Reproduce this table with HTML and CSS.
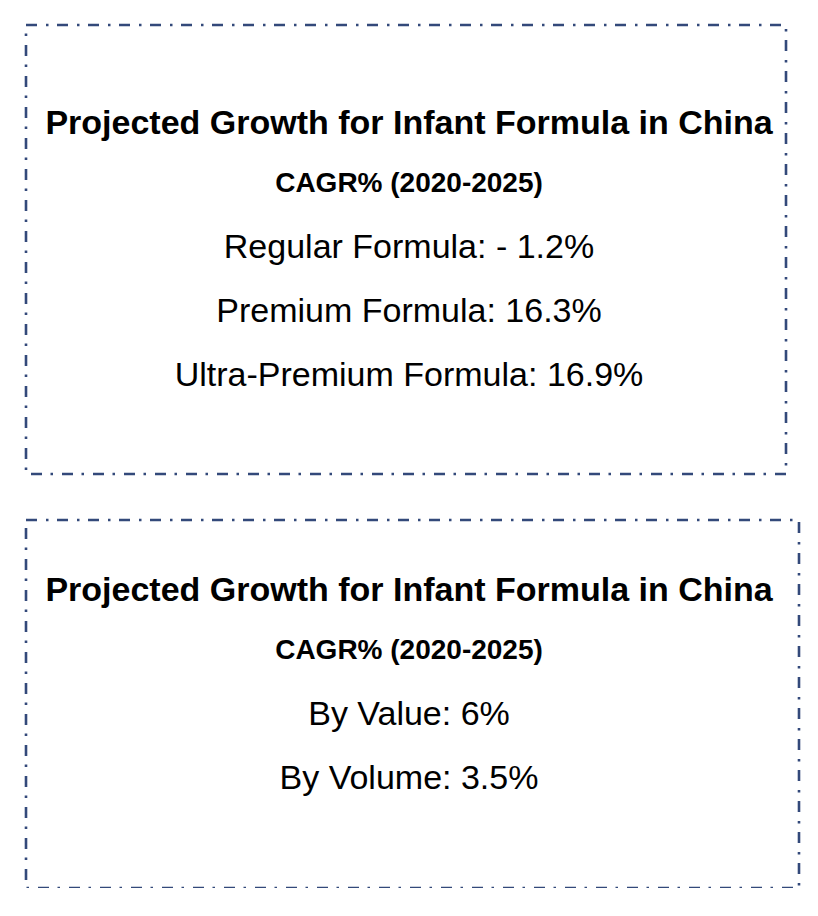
FILE: index.html
```html
<!DOCTYPE html>
<html lang="en">
<head>
<meta charset="utf-8">
<title>Projected Growth for Infant Formula in China</title>
<link rel="stylesheet" href="styles.css">
</head>
<body>
<main class="page">
  <section class="card card-one">
    <svg class="frame" aria-hidden="true"><rect x="0" y="0" width="100%" height="100%"/></svg>
    <h2 class="title">Projected Growth for Infant Formula in China</h2>
    <p class="subtitle">CAGR% (2020-2025)</p>
    <p class="item">Regular Formula: - 1.2%</p>
    <p class="item">Premium Formula: 16.3%</p>
    <p class="item">Ultra-Premium Formula: 16.9%</p>
  </section>
  <section class="card card-two">
    <svg class="frame" aria-hidden="true"><rect x="0" y="0" width="100%" height="100%"/></svg>
    <h2 class="title">Projected Growth for Infant Formula in China</h2>
    <p class="subtitle">CAGR% (2020-2025)</p>
    <p class="item">By Value: 6%</p>
    <p class="item">By Volume: 3.5%</p>
  </section>
</main>
</body>
</html>
```

FILE: styles.css
```css
html, body {
  margin: 0;
  padding: 0;
  background: #ffffff;
}

body {
  font-family: "Liberation Sans", Arial, Helvetica, sans-serif;
  color: #000000;
}

.page {
  display: flex;
  flex-direction: column;
  align-items: flex-start;
  gap: 46px;
  padding: 25px 0 0 26px;
}

.card {
  position: relative;
  box-sizing: border-box;
  display: flex;
  flex-direction: column;
  align-items: center;
  text-align: center;
}

.card-one {
  width: 760px;
  height: 449px;
  padding: 67px 0 0 6px;
}

.card-two {
  width: 773px;
  height: 368px;
  padding: 39px 7px 0 0;
}

.frame {
  position: absolute;
  inset: 0;
  width: 100%;
  height: 100%;
  overflow: visible;
  pointer-events: none;
}

.frame rect {
  fill: none;
  stroke: #33497a;
  stroke-width: 2.6;
  stroke-dasharray: 11 9 2.5 8.5;
}

.title {
  margin: 0;
  font-size: 34px;
  font-weight: 700;
  line-height: 60px;
  white-space: nowrap;
}

.subtitle {
  margin: 0;
  font-size: 28px;
  font-weight: 700;
  line-height: 62px;
}

.item {
  margin: 0;
  font-size: 34px;
  font-weight: 400;
  line-height: 64px;
}
```
